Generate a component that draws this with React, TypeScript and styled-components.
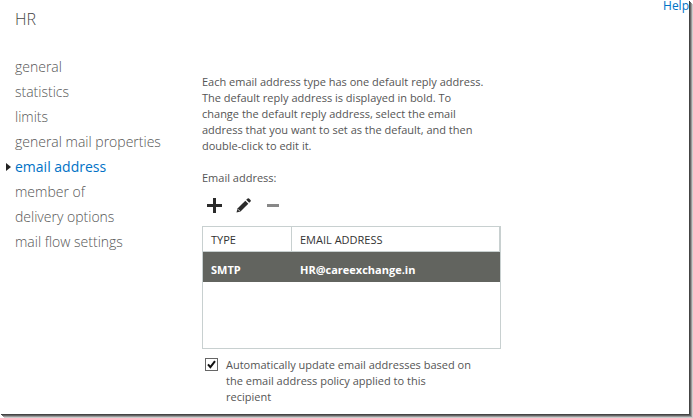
import React, { useState } from 'react';
import styled, { createGlobalStyle } from 'styled-components';

const GlobalStyle = createGlobalStyle`
  *, *::before, *::after { box-sizing: border-box; }
  body { margin: 0; background: #fff; }
  body, button, input, table { font-family: "Open Sans", "Noto Sans", sans-serif; }
`;

const Window = styled.div`
  display: flex;
  flex-direction: column;
  min-height: calc(100vh - 4px);
  margin: 0 4px 4px 0;
  background: #fff;
  color: #555;
  font-size: 11px;
  line-height: 16px;
  box-shadow: 1px 1px 0 #444, 2px 2px 0 #666, 3px 3px 0 #999, 4px 4px 0 #ccc;
`;

const TopBar = styled.header`
  display: flex;
  justify-content: space-between;
  align-items: flex-start;
  height: 54px;
  padding-left: 15px;
`;

const Title = styled.h1`
  margin: 8px 0 0;
  font-size: 16px;
  line-height: 22px;
  font-weight: 300;
  color: #444;
`;

const HelpLink = styled.a`
  font-size: 12px;
  line-height: 12px;
  color: #0072c6;
  text-decoration: none;
`;

const Body = styled.div`
  display: flex;
  align-items: flex-start;
`;

const Nav = styled.nav`
  flex: 0 0 202px;
  display: flex;
  flex-direction: column;
`;

const NavLink = styled.a<{ $active?: boolean }>`
  display: grid;
  grid-template-columns: 5px 1fr;
  column-gap: 4px;
  align-items: center;
  padding-left: 6px;
  line-height: 25px;
  font-size: 14px;
  font-weight: ${(p) => (p.$active ? 400 : 300)};
  color: ${(p) => (p.$active ? '#0072c6' : '#555')};
  text-decoration: none;
  white-space: nowrap;
`;

const Marker = styled.span<{ $active?: boolean }>`
  border: 4px solid transparent;
  border-left: 5px solid ${(p) => (p.$active ? '#222' : 'transparent')};
  border-right: 0;
`;

const Content = styled.main`
  flex: 0 1 299px;
  min-width: 0;
  padding: 20px 0 9px;
`;

const Paragraph = styled.p`
  margin: 0 0 16px;
  white-space: nowrap;
`;

const Toolbar = styled.div`
  display: flex;
  gap: 8px;
  padding: 8px 0 10px 2px;
`;

const ToolButton = styled.button`
  display: flex;
  align-items: center;
  justify-content: center;
  width: 21px;
  height: 22px;
  padding: 0;
  border: 0;
  background: none;
  color: #2b2b2b;

  &:disabled { color: #888; }
`;

const ListBox = styled.div`
  min-height: 123px;
  border: 1px solid #c8d0d0;
`;

const Table = styled.table`
  width: 100%;
  border-collapse: separate;
  border-spacing: 0;
  table-layout: fixed;
`;

const HeadCell = styled.th<{ $narrow?: boolean }>`
  width: ${(p) => (p.$narrow ? '89px' : 'auto')};
  height: 25px;
  padding: 2px 8px 0;
  border-bottom: 1px solid #c8d0d0;
  border-right: 1px solid #c8d0d0;
  text-align: left;
  font-size: 11px;
  line-height: 16px;
  font-weight: 400;
  color: #333;
`;

const Cell = styled.td`
  height: 30px;
  padding: 6px 8px 0;
  background: #62645f;
  color: #fff;
  font-size: 11px;
  line-height: 16px;
  font-weight: 700;
`;

const Option = styled.label`
  display: grid;
  grid-template-columns: 13px 1fr;
  column-gap: 8px;
  align-items: start;
  margin-top: 8px;
  padding-left: 3px;
  white-space: nowrap;
`;

const CheckFrame = styled.span`
  display: grid;
  width: 13px;
  height: 13px;
  margin-top: 1px;

  > * { grid-area: 1 / 1; }
`;

const Checkbox = styled.input`
  appearance: none;
  width: 13px;
  height: 13px;
  margin: 0;
  border: 1px solid #666;
  background: #fff;

  & + svg { visibility: hidden; pointer-events: none; }
  &:checked + svg { visibility: visible; }
`;

const sections = [
  'general',
  'statistics',
  'limits',
  'general mail properties',
  'email address',
  'member of',
  'delivery options',
  'mail flow settings',
];

const addresses = [{ type: 'SMTP', address: 'HR@careexchange.in' }];

export default function App() {
  const [autoUpdate, setAutoUpdate] = useState(true);
  const active = 'email address';

  return (
    <>
      <GlobalStyle />
      <Window>
        <TopBar>
          <Title>HR</Title>
          <HelpLink href="#help">Help</HelpLink>
        </TopBar>
        <Body>
          <Nav>
            {sections.map((name) => (
              <NavLink
                key={name}
                href="#section"
                $active={name === active}
                aria-current={name === active ? 'page' : undefined}
              >
                <Marker $active={name === active} />
                {name}
              </NavLink>
            ))}
          </Nav>
          <Content>
            <Paragraph>
              Each email address type has one default reply address.<br />
              The default reply address is displayed in bold. To<br />
              change the default reply address, select the email<br />
              address that you want to set as the default, and then<br />
              double-click to edit it.
            </Paragraph>
            <div id="address-label">Email address:</div>
            <Toolbar>
              <ToolButton type="button" aria-label="Add">
                <svg width="15" height="15" viewBox="0 0 15 15">
                  <path d="M6 0h3v6h6v3H9v6H6V9H0V6h6z" fill="currentColor" />
                </svg>
              </ToolButton>
              <ToolButton type="button" aria-label="Edit">
                <svg width="15" height="15" viewBox="0 0 15 15">
                  <path d="M0.5 14.5l1-4L9.3 2.7l3 3L4.5 13.5z" fill="currentColor" />
                  <path d="M10.2 1.8L11.6 0.5q0.7-0.6 1.4 0l1.5 1.5q0.6 0.7 0 1.4L13.2 4.8z" fill="currentColor" />
                  <path d="M1.9 11.2l1.9 1.9" stroke="#fff" strokeWidth="0.8" />
                </svg>
              </ToolButton>
              <ToolButton type="button" aria-label="Remove" disabled>
                <svg width="12" height="3" viewBox="0 0 12 3">
                  <path d="M0 0h12v3H0z" fill="currentColor" />
                </svg>
              </ToolButton>
            </Toolbar>
            <ListBox>
              <Table aria-labelledby="address-label">
                <thead>
                  <tr>
                    <HeadCell scope="col" $narrow>TYPE</HeadCell>
                    <HeadCell scope="col">EMAIL ADDRESS</HeadCell>
                  </tr>
                </thead>
                <tbody>
                  {addresses.map((row) => (
                    <tr key={row.address}>
                      <Cell>{row.type}</Cell>
                      <Cell>{row.address}</Cell>
                    </tr>
                  ))}
                </tbody>
              </Table>
            </ListBox>
            <Option>
              <CheckFrame>
                <Checkbox
                  type="checkbox"
                  checked={autoUpdate}
                  onChange={(e) => setAutoUpdate(e.target.checked)}
                />
                <svg width="13" height="13" viewBox="0 0 13 13">
                  <path d="M3 6.3l2.4 2.9L10 3.2" fill="none" stroke="#111" strokeWidth="2" />
                </svg>
              </CheckFrame>
              <span>
                Automatically update email addresses based on<br />
                the email address policy applied to this<br />
                recipient
              </span>
            </Option>
          </Content>
        </Body>
      </Window>
    </>
  );
}
